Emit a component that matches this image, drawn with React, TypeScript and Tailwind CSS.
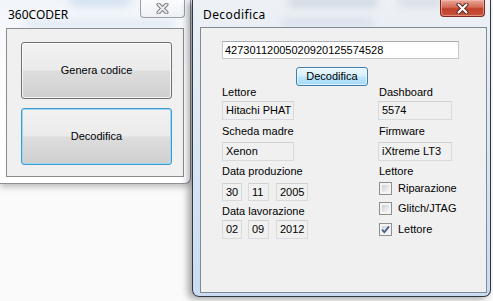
import React from "react";

const body = "font-['Liberation_Sans',Arial,sans-serif] text-[11px] text-black";

function Field({ value, w, h = 19 }: { value: string; w: number; h?: number }) {
  return (
    <div
      className="flex items-center border border-[#d9dadc] border-t-[#cfd0d3] bg-[#f0f0f0] pl-[3px] leading-none"
      style={{ width: w, height: h }}
    >
      {value}
    </div>
  );
}

function Label({ children, className = "" }: { children: React.ReactNode; className?: string }) {
  return <div className={`h-[13px] leading-[13px] ${className}`}>{children}</div>;
}

function Check({ label, checked = false, className = "" }: { label: string; checked?: boolean; className?: string }) {
  return (
    <div className={`flex h-[13px] items-center gap-[6px] ${className}`}>
      <div className="relative h-[13px] w-[13px] border border-[#8e8f8f] bg-[#f4f4f4]">
        <div className="absolute inset-[2px] bg-[linear-gradient(135deg,#cdd1d6,#f7f7f7)]" />
        {checked && (
          <svg className="absolute inset-0" width="11" height="11" viewBox="0 0 11 11">
            <path d="M2 5.6 L4.4 8.2 L9 2.4" fill="none" stroke="#4a5d88" strokeWidth="1.7" />
          </svg>
        )}
      </div>
      <span className="leading-none">{label}</span>
    </div>
  );
}

function BigButton({ label, focused = false }: { label: string; focused?: boolean }) {
  return (
    <div
      className={`ml-[14px] flex h-[57px] w-[151px] items-center justify-center rounded-[3px] border bg-[linear-gradient(to_bottom,#f2f2f2_0%,#ebebeb_48%,#dddddd_52%,#cfcfcf_100%)] ${
        focused
          ? "border-[#3c9bd0] shadow-[inset_0_0_0_1px_#9fd6f2]"
          : "border-[#707070] shadow-[inset_0_0_0_1px_rgba(255,255,255,0.75)]"
      }`}
    >
      {label}
    </div>
  );
}

function CloseX({ light }: { light: boolean }) {
  return (
    <svg width="13" height="11" viewBox="0 0 13 11">
      <path d="M2.5 1.5 L10.5 9.5 M10.5 1.5 L2.5 9.5" stroke={light ? "#5b2a24" : "#7c8188"} strokeWidth="4" strokeLinecap="round" />
      <path d="M2.5 1.5 L10.5 9.5 M10.5 1.5 L2.5 9.5" stroke={light ? "#ffffff" : "#e9ebee"} strokeWidth="2" strokeLinecap="round" />
    </svg>
  );
}

export default function App() {
  return (
    <div className={`relative h-[301px] w-[493px] overflow-hidden bg-[#fafafa] ${body}`}>
      {/* 360CODER */}
      <div className="absolute left-0 top-0 h-[184px] w-[191px] overflow-hidden rounded-br-[6px] border-r border-b border-[#8a8f96] bg-[linear-gradient(to_bottom,#f1f5fa,#fdfdfe_40%,#ffffff)] shadow-[0_3px_6px_rgba(0,0,0,0.25)]">
        <div className="absolute left-[70px] top-[-4px] h-[10px] w-[60px] rounded-full bg-[#b8cfe8] opacity-60 blur-[4px]" />
        <div className="absolute left-[25px] top-[20px] h-[8px] w-[150px] rounded-full bg-[#c7d8ec] opacity-50 blur-[4px]" />
        <div className="relative flex h-[28px] items-start justify-between">
          <span className="pl-[8px] pt-[6px] font-['Noto_Sans',sans-serif] text-[12px]">360CODER</span>
          <div className="mr-[5px] flex h-[18px] w-[45px] items-center justify-center rounded-b-[4px] border border-t-0 border-[#9aa0a8] bg-[linear-gradient(to_bottom,#fbfcfd,#eef1f4)]">
            <CloseX light={false} />
          </div>
        </div>
        <div className="relative ml-[6px] flex h-[149px] w-[178px] flex-col gap-[9px] border border-[#8b8b8b] bg-[#f0f0f0] pt-[13px]">
          <BigButton label="Genera codice" />
          <BigButton label="Decodifica" focused />
        </div>
      </div>

      {/* Decodifica */}
      <div className="absolute left-[192px] top-0 h-[297px] w-[299px] overflow-hidden rounded-b-[7px] border-x border-b border-[#2e3742] bg-[linear-gradient(to_bottom,#eef1f5,#dde8f4_40%,#c9dcf2)] shadow-[-4px_2px_7px_rgba(0,0,0,0.35)]">
        <div className="absolute left-[95px] top-[-3px] h-[10px] w-[90px] rounded-full bg-[#9fb0c4] opacity-40 blur-[4px]" />
        <div className="absolute left-[205px] top-[-3px] h-[10px] w-[45px] rounded-full bg-[#9fb0c4] opacity-30 blur-[4px]" />
        <div className="absolute left-[90px] top-[19px] h-[7px] w-[90px] rounded-full bg-[#a8b8cc] opacity-35 blur-[4px]" />
        <div className="relative flex h-[27px] items-start justify-between">
          <span className="pl-[10px] pt-[6px] font-['Noto_Sans',sans-serif] text-[12px] tracking-[0.4px]">Decodifica</span>
          <div className="mr-[5px] flex h-[17px] w-[45px] items-center justify-center rounded-b-[4px] border border-t-0 border-[#7a2a20] bg-[linear-gradient(to_bottom,#e9a99a,#d46a55_45%,#c0412d_55%,#c8533c)] shadow-[inset_0_0_0_1px_rgba(255,200,190,0.5)]">
            <CloseX light />
          </div>
        </div>
        <div className="relative ml-[7px] h-[266px] w-[287px] border border-[#7f8a97] bg-[#f0f0f0]">
          <div className="ml-[21px] mt-[13px] flex h-[18px] w-[237px] items-center border border-[#c5c8cf] border-t-[#abadb3] bg-white pl-[2px]">
            42730112005020920125574528
          </div>
          <div className="ml-[95px] mt-[8px] flex h-[19px] w-[72px] items-center justify-center rounded-[3px] border border-[#3c7fb1] bg-[linear-gradient(to_bottom,#eaf6fd_0%,#d9f0fc_48%,#bee6fd_52%,#a7d9f5_100%)] shadow-[inset_0_0_0_1px_rgba(255,255,255,0.6)]">
            Decodifica
          </div>
          <div className="flex pl-[21px]">
            <div className="flex w-[156px] flex-col">
              <Label>Lettore</Label>
              <div className="mt-[2px]">
                <Field value="Hitachi PHAT" w={72} />
              </div>
              <Label className="mt-[5px]">Scheda madre</Label>
              <div className="mt-[4px]">
                <Field value="Xenon" w={72} />
              </div>
              <Label className="mt-[4px]">Data produzione</Label>
              <div className="mt-[5px] flex">
                <Field value="30" w={20} h={18} />
                <div className="ml-[6px]">
                  <Field value="11" w={21} h={18} />
                </div>
                <div className="ml-[7px]">
                  <Field value="2005" w={32} h={18} />
                </div>
              </div>
              <Label className="mt-[4px]">Data lavorazione</Label>
              <div className="mt-[2px] flex">
                <Field value="02" w={20} />
                <div className="ml-[6px]">
                  <Field value="09" w={21} />
                </div>
                <div className="ml-[7px]">
                  <Field value="2012" w={32} />
                </div>
              </div>
            </div>
            <div className="flex flex-col">
              <Label className="pl-[1px]">Dashboard</Label>
              <div className="mt-[2px]">
                <Field value="5574" w={74} />
              </div>
              <Label className="mt-[5px] pl-[1px]">Firmware</Label>
              <div className="mt-[4px]">
                <Field value="iXtreme LT3" w={74} />
              </div>
              <Label className="mt-[4px] pl-[1px]">Lettore</Label>
              <Check className="ml-[1px] mt-[4px]" label="Riparazione" />
              <Check className="ml-[1px] mt-[7px]" label="Glitch/JTAG" />
              <Check className="ml-[1px] mt-[8px]" label="Lettore" checked />
            </div>
          </div>
        </div>
      </div>
    </div>
  );
}
